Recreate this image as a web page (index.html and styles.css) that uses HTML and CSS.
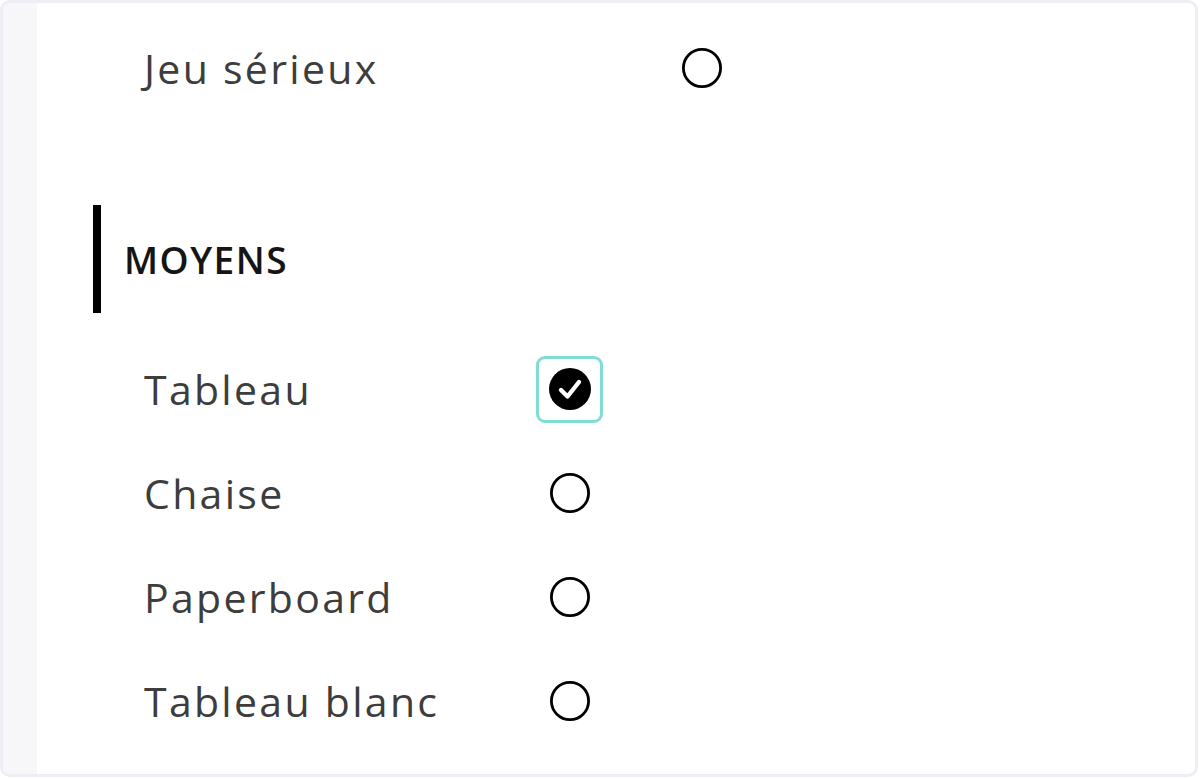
FILE: index.html
```html
<!DOCTYPE html>
<html lang="fr">
<head>
  <meta charset="UTF-8">
  <title>Moyens</title>
  <link rel="stylesheet" href="styles.css">
</head>
<body>
<div class="frame">
  <aside class="rail"></aside>
  <main class="panel">
    <section class="group wide">
      <div class="option">
        <span class="label">Jeu sérieux</span>
        <span class="pick">
          <svg width="44" height="44" viewBox="0 0 44 44"><circle cx="22" cy="22" r="18.6" fill="none" stroke="#000" stroke-width="2.8"/></svg>
        </span>
      </div>
    </section>
    <section class="group">
      <h2 class="group-title">Moyens</h2>
      <div class="option">
        <span class="label">Tableau</span>
        <span class="pick checked">
          <svg width="44" height="44" viewBox="0 0 44 44"><circle cx="22" cy="22" r="21" fill="#000"/><path d="M13 23 L19.5 29.5 L31 15" fill="none" stroke="#fff" stroke-width="4.4" stroke-linecap="round" stroke-linejoin="round"/></svg>
        </span>
      </div>
      <div class="option">
        <span class="label">Chaise</span>
        <span class="pick">
          <svg width="44" height="44" viewBox="0 0 44 44"><circle cx="22" cy="22" r="18.6" fill="none" stroke="#000" stroke-width="2.8"/></svg>
        </span>
      </div>
      <div class="option">
        <span class="label">Paperboard</span>
        <span class="pick">
          <svg width="44" height="44" viewBox="0 0 44 44"><circle cx="22" cy="22" r="18.6" fill="none" stroke="#000" stroke-width="2.8"/></svg>
        </span>
      </div>
      <div class="option">
        <span class="label">Tableau blanc</span>
        <span class="pick">
          <svg width="44" height="44" viewBox="0 0 44 44"><circle cx="22" cy="22" r="18.6" fill="none" stroke="#000" stroke-width="2.8"/></svg>
        </span>
      </div>
    </section>
  </main>
</div>
</body>
</html>
```

FILE: styles.css
```css
body { margin: 0; background: #fff; font-family: "Open Sans", "Noto Sans", sans-serif; color: #3d3d3d; }
.frame { display: flex; width: 1198px; height: 777px; box-sizing: border-box; border: 3px solid #eeedf4; border-radius: 10px; overflow: hidden; background: #fff; }
.rail { width: 34px; flex: none; background: #f7f7f9; }
.panel { flex: 1; padding: 13px 0 0 56px; }
.group + .group { margin-top: 85px; }
.group-title { margin: 0 0 24px; height: 108px; box-sizing: border-box; border-left: 8px solid #000; padding-left: 23px; display: flex; align-items: center; font-size: 37px; font-weight: 600; text-transform: uppercase; color: #151515; letter-spacing: 1.5px; }
.option { display: flex; align-items: center; height: 104px; padding-left: 51px; }
.label { width: 392px; font-size: 41px; letter-spacing: 2.3px; }
.wide .label { width: 524px; }
.pick { width: 67px; height: 67px; box-sizing: border-box; border: 3px solid transparent; border-radius: 9px; display: flex; align-items: center; justify-content: center; }
.pick.checked { border-color: #7fded2; }
```
